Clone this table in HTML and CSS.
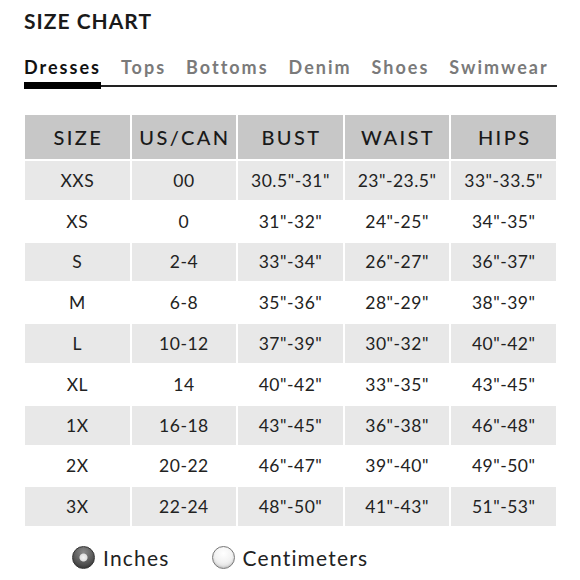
FILE: index.html
```html
<!DOCTYPE html>
<html>
<head>
<meta charset="utf-8">
<link rel="stylesheet" href="styles.css">
</head>
<body>
<div class="page">
  <h1 class="title">SIZE CHART</h1>
  <nav class="tabs">
    <span class="tab active">Dresses</span>
    <span class="tab">Tops</span>
    <span class="tab">Bottoms</span>
    <span class="tab">Denim</span>
    <span class="tab">Shoes</span>
    <span class="tab">Swimwear</span>
  </nav>
  <div class="chart">
    <div class="hd">SIZE</div><div class="hd">US/CAN</div><div class="hd">BUST</div><div class="hd">WAIST</div><div class="hd">HIPS</div>
    <div class="c g">XXS</div><div class="c g">00</div><div class="c g">30.5"-31"</div><div class="c g">23"-23.5"</div><div class="c g">33"-33.5"</div>
    <div class="c">XS</div><div class="c">0</div><div class="c">31"-32"</div><div class="c">24"-25"</div><div class="c">34"-35"</div>
    <div class="c g">S</div><div class="c g">2-4</div><div class="c g">33"-34"</div><div class="c g">26"-27"</div><div class="c g">36"-37"</div>
    <div class="c">M</div><div class="c">6-8</div><div class="c">35"-36"</div><div class="c">28"-29"</div><div class="c">38"-39"</div>
    <div class="c g">L</div><div class="c g">10-12</div><div class="c g">37"-39"</div><div class="c g">30"-32"</div><div class="c g">40"-42"</div>
    <div class="c">XL</div><div class="c">14</div><div class="c">40"-42"</div><div class="c">33"-35"</div><div class="c">43"-45"</div>
    <div class="c g">1X</div><div class="c g">16-18</div><div class="c g">43"-45"</div><div class="c g">36"-38"</div><div class="c g">46"-48"</div>
    <div class="c">2X</div><div class="c">20-22</div><div class="c">46"-47"</div><div class="c">39"-40"</div><div class="c">49"-50"</div>
    <div class="c g">3X</div><div class="c g">22-24</div><div class="c g">48"-50"</div><div class="c g">41"-43"</div><div class="c g">51"-53"</div>
  </div>
  <div class="units">
    <label class="unit"><span class="radio on"></span>Inches</label>
    <label class="unit"><span class="radio"></span>Centimeters</label>
  </div>
</div>
</body>
</html>
```

FILE: styles.css
```css
html, body {
  margin: 0;
  padding: 0;
  background: #fff;
}
.page {
  width: 580px;
  height: 580px;
  overflow: hidden;
  padding: 0 0 0 24px;
  box-sizing: border-box;
  font-family: Lato, "Noto Sans", sans-serif;
  color: #222;
}
.title {
  margin: 9px 0 0 0;
  font-size: 21px;
  line-height: 24px;
  font-weight: 700;
  letter-spacing: 1px;
  color: #1a1a1a;
}
.tabs {
  display: flex;
  gap: 20px;
  margin-top: 24px;
  width: 533px;
  border-bottom: 2px solid #222;
  padding-bottom: 8px;
}
.tab {
  font-size: 18px;
  line-height: 20px;
  font-weight: 700;
  letter-spacing: 2px;
  color: #7a7a7a;
}
.tab.active {
  position: relative;
  color: #111;
}
.tab.active::after {
  content: "";
  position: absolute;
  left: 0;
  right: 0;
  bottom: -12px;
  height: 7px;
  background: #000;
}
.chart {
  display: grid;
  grid-template-columns: repeat(5, 1fr);
  grid-template-rows: 44px repeat(9, 38.8px);
  gap: 2px;
  width: 531px;
  margin-top: 28px;
  margin-left: 1px;
}
.hd {
  background: #c7c7c7;
  display: flex;
  align-items: center;
  justify-content: center;
  font-size: 20px;
  font-weight: 500;
  letter-spacing: 2.4px;
  color: #1a1a1a;
  padding-left: 2px;
}
.c {
  display: flex;
  align-items: center;
  justify-content: center;
  font-size: 17.5px;
  letter-spacing: 0.5px;
  color: #222;
}
.c.g {
  background: #e8e8e8;
}
.units {
  display: flex;
  gap: 42px;
  margin-top: 19px;
  margin-left: 48px;
}
.unit {
  display: flex;
  align-items: center;
  gap: 8px;
  font-size: 21px;
  letter-spacing: 1.2px;
  color: #222;
}
.radio {
  width: 23px;
  height: 23px;
  border-radius: 50%;
  box-sizing: border-box;
  border: 1px solid #777;
  background: radial-gradient(circle at 50% 30%, #ffffff 0%, #f2f2f2 50%, #d4d4d4 100%);
  box-shadow: inset 0 -1px 2px rgba(0,0,0,0.15);
}
.radio.on {
  border: 1px solid #333;
  background:
    radial-gradient(circle at 50% 50%, #f4f4f4 0, #e0e0e0 3.5px, rgba(0,0,0,0) 4.5px),
    radial-gradient(circle at 50% 25%, #8a8a8a 0%, #555 60%, #333 100%);
}
```
